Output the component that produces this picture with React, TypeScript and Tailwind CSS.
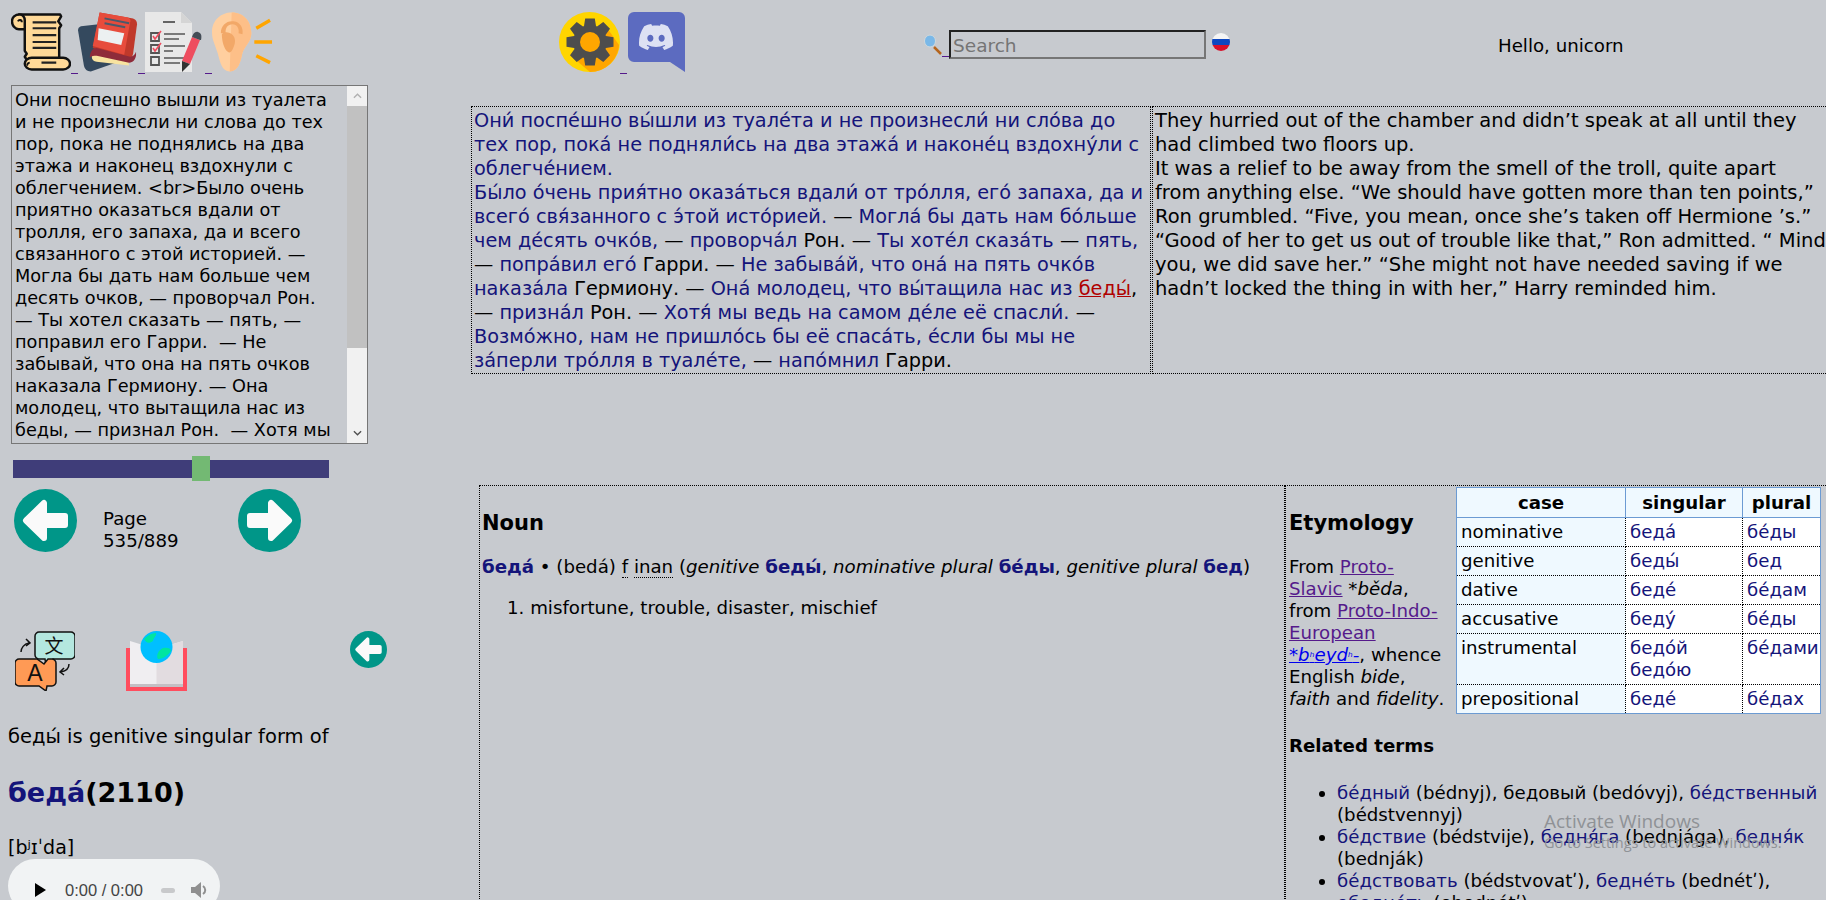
import { ReactNode } from "react"

const ink = "text-[#14147a]"

function W({ children }: { children: ReactNode }) {
    return <span className={ink}>{children}</span>
}

function ScrollIcon() {
    return (
        <svg viewBox="0 0 61 60" className="w-[60px] h-[60px]">
            <path d="M8 2H50l1 2-3 5 3 4-2 3V48H16l-2-3 2-3-2-3V16L8 16z" fill="#ffd998" stroke="#111" strokeWidth="2.500" strokeLinejoin="round" />
            <path d="M9 2C4 2 1 5 1 9s3 8 7 8h6V8C14 5 12 2 9 2z" fill="#ffd998" stroke="#111" strokeWidth="2.500" />
            <path d="M7 9c1-2 4-2 4 1" fill="none" stroke="#111" strokeWidth="2" />
            <path d="M21 46H53c4 0 7 3 7 6s-3 6-7 6H21c-4 0-7-3-7-6s3-6 7-6z" fill="#ffd998" stroke="#111" strokeWidth="2.500" />
            <path d="M22 10h24M22 16h24M22 23h24M22 30h24M22 36h24M31 51h15" stroke="#222" strokeWidth="2.200" />
            <path d="M19 51c-2 0-3 2-2 3" fill="none" stroke="#111" strokeWidth="2" />
        </svg>
    )
}

function BookIcon() {
    return (
        <svg viewBox="0 0 61 60" className="w-[60px] h-[60px]">
            <path d="M0 18c0-2 1-3 3-4l18-2 26 36-34 12c-4 0-6-2-7-6z" fill="#34495e" />
            <path d="M22 0l34 6c3 1 4 3 4 6l-4 30c-1 4-3 6-7 6L15 36z" fill="#c0392b" />
            <path d="M14 45c1-5 4-7 7-7l32 8c-2 3-2 5-1 8l-33-4c-3 0-5-2-5-5z" fill="#f8e3a0" />
            <path d="M12 46c0-6 3-10 7-10l34 9c3 0 5-2 6-5l0 4c-1 4-3 7-7 7l-33-7c-3 0-5 0-7 2z" fill="#8e2b3a" />
            <path d="M22 0l29 5c2 1 3 3 2 5l-6 33-32-9z" fill="#e74c3c" />
            <path d="M27 6l25 5M27 11l21 4" stroke="#4a5a6c" strokeWidth="2" />
            <path d="M21 16l26 5-3 12-24-5z" fill="#ecf0f1" />
        </svg>
    )
}

function ChecklistIcon() {
    return (
        <svg viewBox="0 0 60 60" className="w-[60px] h-[60px]">
            <path d="M0 0h36l11 11v49H0z" fill="#e8e8e8" />
            <path d="M36 0l11 11H36z" fill="#d5d5d5" />
            <path d="M18 10h12" stroke="#555" strokeWidth="1.800" />
            <path d="M6 21h8v8H6zM6 33h8v8H6zM6 45h8v8H6z" fill="none" stroke="#555" strokeWidth="1.800" />
            <path d="M8 24l2 3 6-8M8 36l2 3 6-8" fill="none" stroke="#ee4d5f" strokeWidth="1.600" />
            <path d="M19 22h21M19 27h15M19 34h21M19 39h9M19 46h21M19 51h16" stroke="#555" strokeWidth="1.600" />
            <path d="M47 25l8 3-10 24-8-3z" fill="#ee4d5f" />
            <path d="M47 25c1-3 3-6 6-5 3 1 4 3 3 8l-1 0z" fill="#444c56" />
            <path d="M37 49l8 3-8 8z" fill="#333" />
        </svg>
    )
}

function EarIcon() {
    return (
        <svg viewBox="0 0 62 60" className="w-[61px] h-[60px]">
            <path d="M20 0c13 0 20 10 20 21 0 9-7 13-9 20-2 9-4 19-13 19C10 60 8 50 6 42 3 32 0 28 0 20 0 8 9 0 20 0z" fill="#ffcf9f" />
            <path d="M20 0c13 0 20 10 20 21 0 9-7 13-9 20-2 9-4 19-13 19z" fill="#fdbf88" />
            <path d="M9 21c0-8 6-13 13-12 7 1 10 7 9 13l-4-1c1-5-2-9-6-9-5 0-8 4-7 9z" fill="#f2a868" />
            <path d="M10 22c3-3 8-2 11 1 3 3 3 8 1 12-2 5-4 7-6 5-4-3-6-12-6-18z" fill="#f2a868" />
            <path d="M45 16l14-8M43 30h18M45 44l14 7" stroke="#ffa500" strokeWidth="3.500" />
        </svg>
    )
}

// gear outline with eight teeth
const gearPoints = Array.from({ length: 8 }, (_, i) => {
    const a = (i * Math.PI) / 4
    const pt = (r: number, d: number) => `${(31 + r * Math.cos(a + d)).toFixed(1)},${(30 + r * Math.sin(a + d)).toFixed(1)}`
    return [pt(17, -0.36), pt(24, -0.2), pt(24, 0.2), pt(17, 0.36)].join(" ")
}).join(" ")

function GearIcon() {
    return (
        <svg viewBox="0 0 61 60" className="w-[61px] h-[60px]">
            <ellipse cx="30.500" cy="30" rx="30.500" ry="30" fill="#ffd500" />
            <path d="M44 10L60 33C59 48 46 60 31 60L12 44z" fill="#ffa600" />
            <polygon points={gearPoints} fill="#4d4d4d" />
            <circle cx="31" cy="30" r="10" fill="#ffa600" />
        </svg>
    )
}

function DiscordIcon() {
    return (
        <svg viewBox="0 0 57 60" className="w-[57px] h-[60px]">
            <path d="M6 0H51a6 6 0 0 1 6 6V60L42 50H6a6 6 0 0 1-6-6V6a6 6 0 0 1 6-6z" fill="#5c6bc0" />
            <svg x="11" y="8" width="34" height="34" viewBox="0 0 24 24">
                <path d="M20.317 4.3698a19.7913 19.7913 0 00-4.8851-1.5152.0741.0741 0 00-.0785.0371c-.211.3753-.4447.8648-.6083 1.2495-1.8447-.2762-3.68-.2762-5.4868 0-.1636-.3933-.4058-.8742-.6177-1.2495a.077.077 0 00-.0785-.037 19.7363 19.7363 0 00-4.8852 1.515.0699.0699 0 00-.0321.0277C.5334 9.0458-.319 13.5799.0992 18.0578a.0824.0824 0 00.0312.0561c2.0528 1.5076 4.0413 2.4228 5.9929 3.0294a.0777.0777 0 00.0842-.0276c.4616-.6304.8731-1.2952 1.226-1.9942a.076.076 0 00-.0416-.1057c-.6528-.2476-1.2743-.5495-1.8722-.8923a.077.077 0 01-.0076-.1277c.1258-.0943.2517-.1923.3718-.2914a.0743.0743 0 01.0776-.0105c3.9278 1.7933 8.18 1.7933 12.0614 0a.0739.0739 0 01.0785.0095c.1202.099.246.1981.3728.2924a.077.077 0 01-.0066.1276 12.2986 12.2986 0 01-1.873.8914.0766.0766 0 00-.0407.1067c.3604.698.7719 1.3628 1.225 1.9932a.076.076 0 00.0842.0286c1.961-.6067 3.9495-1.5219 6.0023-3.0294a.077.077 0 00.0313-.0552c.5004-5.177-.8382-9.6739-3.5485-13.6604a.061.061 0 00-.0312-.0286zM8.02 15.3312c-1.1825 0-2.1569-1.0857-2.1569-2.419 0-1.3332.9555-2.4189 2.157-2.4189 1.2108 0 2.1757 1.0952 2.1568 2.419 0 1.3332-.9555 2.4189-2.1569 2.4189zm7.9748 0c-1.1825 0-2.1569-1.0857-2.1569-2.419 0-1.3332.9554-2.4189 2.1569-2.4189 1.2108 0 2.1757 1.0952 2.1568 2.419 0 1.3332-.946 2.4189-2.1568 2.4189Z" fill="#dde1f3" />
            </svg>
        </svg>
    )
}

function MagnifierIcon() {
    return (
        <svg viewBox="0 0 18 21" className="w-[18px] h-[21px]">
            <path d="M10 13l7 7" stroke="#b5651d" strokeWidth="2.500" />
            <ellipse cx="6" cy="7" rx="5.500" ry="6" fill="#7ab8e8" stroke="#cfd8dc" />
        </svg>
    )
}

function FlagIcon() {
    return (
        <svg viewBox="0 0 20 18" className="w-5 h-[18px]">
            <clipPath id="flag-clip">
                <ellipse cx="10" cy="9" rx="9" ry="9" />
            </clipPath>
            <g clipPath="url(#flag-clip)">
                <rect width="20" height="6" fill="#f5f5f5" />
                <rect y="6" width="20" height="6" fill="#0d47c1" />
                <rect y="12" width="20" height="6" fill="#d8102a" />
            </g>
        </svg>
    )
}

function ArrowButton({ dir, small }: { dir: "left" | "right"; small?: boolean }) {
    const points = dir === "left"
        ? "12,31.500 30,14 30,27 51,27 51,36 30,36 30,49"
        : "51,31.500 33,14 33,27 12,27 12,36 33,36 33,49"
    return (
        <svg viewBox="0 0 63 63" className={small ? "w-[37px] h-[37px]" : "w-[63px] h-[63px]"}>
            <circle cx="31.500" cy="31.500" r="31.500" fill="#009688" />
            <polygon points={points} fill="#fafafa" stroke="#fafafa" strokeWidth="6" strokeLinejoin="round" />
        </svg>
    )
}

function TranslateIcon() {
    return (
        <svg viewBox="0 0 60 60" className="w-[60px] h-[60px]">
            <path d="M24 1h32c2 0 4 2 4 4v19c0 2-2 4-4 4H38l-7 7-1-7h-6c-2 0-4-2-4-4V5c0-2 2-4 4-4z" fill="#b4e7df" stroke="#111" strokeWidth="1.500" />
            <path d="M4 28h18l7 5 4-5h4c2 0 4 2 4 4v19c0 2-2 4-4 4h-5l-1 5-7-5H4c-2 0-4-2-4-4V32c0-2 2-4 4-4z" fill="#ff9a55" stroke="#111" strokeWidth="1.500" />
            <path d="M6 21c0-4 3-8 8-9M11 8l4 4-4 3M54 33c0 4-3 7-8 8M49 37l-4 4 4 3" fill="none" stroke="#111" strokeWidth="1.500" />
            <text x="39" y="22" textAnchor="middle" fontSize="19" fill="#111" fontFamily="'Noto Sans CJK SC', sans-serif">文</text>
            <text x="20" y="50" textAnchor="middle" fontSize="23" fill="#111" fontFamily="'Liberation Sans', sans-serif">A</text>
        </svg>
    )
}

function GlobeBookIcon() {
    return (
        <svg viewBox="0 0 61 60" className="w-[61px] h-[60px]">
            <path d="M0 17h61v43H0z" fill="#ff4d5e" />
            <path d="M4 10l26 8 27-8v46H4z" fill="#f0eef1" />
            <path d="M30.500 18L57 10v46H30.500z" fill="#e2dce0" />
            <path d="M4 53h53v3H4z" fill="#c4bfc4" />
            <circle cx="30.500" cy="16" r="16" fill="#00bfff" />
            <path d="M18 8c4-4 8-6 12-6 1 3-3 5-3 8-4 3-7 2-9-2zM32 28c-2-3 0-9 5-11 4-1 8 0 8 3-3 4-7 8-13 8z" fill="#00e5a0" />
        </svg>
    )
}

function IconLink({ children }: { children: ReactNode }) {
    return (
        <a className="flex items-end text-[#551a8b]">
            {children}
            <span className="w-[7px] h-px mb-[-2px] bg-[#551a8b]" />
        </a>
    )
}

function AudioPlayer() {
    return (
        <div className="flex items-center ml-2 mt-[1px] pt-[8px] w-[212px] h-[54px] rounded-full bg-[#f1f3f4] font-['Liberation_Sans',sans-serif] text-[#444]">
            <svg viewBox="0 0 11 14" className="ml-[27px] w-[11px] h-[14px]"><path d="M0 0l11 7-11 7z" fill="#000" /></svg>
            <span className="ml-[19px] text-[16.500px] whitespace-nowrap">0:00 / 0:00</span>
            <span className="ml-[18px] w-[14px] h-[5px] rounded-full bg-[#c8c9cb]" />
            <svg viewBox="0 0 18 18" className="ml-[16px] w-[18px] h-[18px]">
                <path d="M0 6h4l6-5v16l-6-5H0z" fill="#8f8f8f" />
                <path d="M12 5c3 2 3 6 0 8" fill="none" stroke="#8f8f8f" strokeWidth="2" />
            </svg>
        </div>
    )
}

const sourceText = "Они поспешно вышли из туалета и не произнесли ни слова до тех пор, пока не поднялись на два этажа и наконец вздохнули с облегчением. <br>Было очень приятно оказаться вдали от тролля, его запаха, да и всего связанного с этой историей. — Могла бы дать нам больше чем десять очков, — проворчал Рон. — Ты хотел сказать — пять, — поправил его Гарри.  — Не забывай, что она на пять очков наказала Гермиону. — Она молодец, что вытащила нас из беды, — признал Рон.  — Хотя мы ведь на самом деле её спасли. — Возможно, нам не пришлось бы её спасать, если бы мы не заперли тролля в туалете, — напомнил Гарри."

const tableRows = [
    { label: "nominative", singular: ["беда́"], plural: "бе́ды" },
    { label: "genitive", singular: ["беды́"], plural: "бед" },
    { label: "dative", singular: ["беде́"], plural: "бе́дам" },
    { label: "accusative", singular: ["беду́"], plural: "бе́ды" },
    { label: "instrumental", singular: ["бедо́й", "бедо́ю"], plural: "бе́дами" },
    { label: "prepositional", singular: ["беде́"], plural: "бе́дах" },
]

export default function App() {
    return (
        <div className="relative w-[1826px] h-[900px] overflow-hidden bg-[#c7cacf] text-black text-[18.200px] font-['DejaVu_Sans',sans-serif]">
            <header className="flex items-start h-[85px] pt-3">
                <div className="flex items-start w-[559px] pl-[11px]">
                    <IconLink><ScrollIcon /></IconLink>
                    <IconLink><BookIcon /></IconLink>
                    <IconLink><ChecklistIcon /></IconLink>
                    <EarIcon />
                </div>
                <div className="flex w-[365px]">
                    <IconLink><GearIcon /></IconLink>
                    <div className="ml-px"><DiscordIcon /></div>
                </div>
                <div className="flex items-center mt-[18px]">
                    <IconLink><MagnifierIcon /></IconLink>
                    <input
                        placeholder="Search"
                        className="w-[257px] h-[29px] px-[2px] pt-[2px] border-2 border-t-[#222] border-l-[#222] border-r-[#767676] border-b-[#767676] bg-transparent text-[18.500px] outline-none placeholder:text-[#757575]"
                    />
                    <div className="ml-[5px] mb-[5px]"><FlagIcon /></div>
                </div>
                <div className="ml-[267px] mt-[23px] leading-[22px]">Hello, unicorn</div>
            </header>

            <div className="flex items-start">
                <aside className="w-[471px] shrink-0">
                    <div className="flex ml-[11px] w-[357px] h-[359px] border border-[#767676] overflow-hidden">
                        <div className="w-[328px] shrink-0 pl-[3px] pr-[2px] pt-[3px] text-[17.700px] leading-[22px] whitespace-pre-wrap overflow-hidden">{sourceText}</div>
                        <div className="flex flex-col w-[20px] ml-auto shrink-0 bg-[#f1f1f1]">
                            <div className="flex items-center justify-center h-[20px] text-[#b0b0b0]">
                                <svg viewBox="0 0 10 6" className="w-[9px] h-[6px]"><path d="M1 5l4-4 4 4" fill="none" stroke="currentColor" strokeWidth="1.500" /></svg>
                            </div>
                            <div className="h-[242px] bg-[#c1c1c1]" />
                            <div className="flex-1" />
                            <div className="flex items-center justify-center h-[20px] text-[#505050]">
                                <svg viewBox="0 0 10 6" className="w-[9px] h-[6px]"><path d="M1 1l4 4 4-4" fill="none" stroke="currentColor" strokeWidth="1.500" /></svg>
                            </div>
                        </div>
                    </div>

                    <div className="relative ml-[13px] mt-[16px] w-[316px] h-[18px] bg-[#3f3d79]">
                        <div className="absolute left-[179px] top-[-4px] w-[18px] h-[25px] bg-[#73b973]" />
                    </div>

                    <div className="flex items-center ml-[14px] mt-[11px] h-[63px]">
                        <ArrowButton dir="left" />
                        <div className="w-[135px] ml-[26px] mt-[18px] leading-[22px]">Page<br />535/889</div>
                        <ArrowButton dir="right" />
                    </div>

                    <div className="flex items-start mt-[79px] ml-[15px]">
                        <TranslateIcon />
                        <div className="ml-[51px]"><GlobeBookIcon /></div>
                        <div className="ml-[163px]"><ArrowButton dir="left" small /></div>
                    </div>

                    <p className="ml-2 mt-[35px] text-[19.500px] leading-[22px]">беды́ is genitive singular form of</p>
                    <h2 className="ml-2 mt-[27px] text-[27px] font-bold leading-[36px]"><W>беда́</W>(2110)</h2>
                    <p className="ml-2 mt-[25px] text-[19px] leading-[22px]">[bʲɪˈda]</p>
                    <AudioPlayer />
                </aside>

                <main className="flex-1 min-w-0 pt-[21px]">
                    <div className="flex w-[1361px] h-[268px]">
                        <section className="w-[680px] shrink-0 border border-dotted border-black px-[2px] pt-[2px] text-[19.300px] leading-[24px]">
                            <W>Они́ поспе́шно вы́шли из туале́та и не произнесли́ ни сло́ва до тех пор, пока́ не подняли́сь на два этажа́ и наконе́ц вздохну́ли с облегче́нием.</W>
                            <br />
                            <W>Бы́ло о́чень прия́тно оказа́ться вдали́ от тро́лля, его́ запаха, да и всего́ свя́занного с э́той исто́рией.</W> — <W>Могла́ бы дать нам бо́льше чем де́сять очко́в,</W> — <W>проворча́л</W> Рон. — <W>Ты хоте́л сказа́ть</W> — <W>пять,</W> — <W>попра́вил его́</W> Гарри. — <W>Не забыва́й, что она́ на пять очко́в наказа́ла</W> Гермиону. — <W>Она́ молодец, что вы́тащила нас из</W> <span className="text-[#b00000] underline">беды́</span>, — <W>призна́л</W> Рон. — <W>Хотя́ мы ведь на самом де́ле её спасли́.</W> — <W>Возмо́жно, нам не пришло́сь бы её спаса́ть, е́сли бы мы не за́перли тро́лля в туале́те,</W> — <W>напо́мнил</W> Гарри.
                        </section>
                        <section className="w-[680px] shrink-0 ml-px border border-dotted border-black pl-[2px] pt-[2px] text-[19.500px] leading-[24px]">
                            They hurried out of the chamber and didn’t speak at all until they had climbed two floors up.
                            <br />
                            It was a relief to be away from the smell of the troll, quite apart from&nbsp;anything else. “We should have gotten more than ten points,” Ron grumbled. “Five, you mean, once she’s taken off Hermione ’s.” “Good of her to get us out of trouble like that,” Ron admitted. “ Mind you, we did save her.” “She might not have needed saving if we hadn’t locked the thing in with her,” Harry reminded him.
                        </section>
                    </div>

                    <div className="flex ml-2 mt-[111px] h-[416px]">
                        <section className="w-[806px] shrink-0 border border-dotted border-black border-b-0 px-[2px] leading-[22px]">
                            <h3 className="mt-[25px] text-[21px] font-bold leading-[24px]">Noun</h3>
                            <p className="mt-[21px]">
                                <b className={ink}>беда́</b> • (bedá) <span className="border-b border-dotted border-black">f</span> <span className="border-b border-dotted border-black">inan</span> (<i>genitive</i> <b className={ink}>беды́</b>, <i>nominative plural</i> <b className={ink}>бе́ды</b>, <i>genitive plural</i> <b className={ink}>бед</b>)
                            </p>
                            <ol className="mt-[19px] ml-[25px]">
                                <li>1. misfortune, trouble, disaster, mischief</li>
                            </ol>
                        </section>
                        <section className="flex-1 min-w-0 border border-dotted border-black border-b-0 border-r-0 pl-[3px] leading-[22px]">
                            <div className="flex items-start">
                                <div className="w-[167px] shrink-0 pr-[10px]">
                                    <h3 className="mt-[25px] text-[21px] font-bold leading-[24px]">Etymology</h3>
                                    <p className="mt-[21px]">
                                        From <a className="text-[#551a8b] underline">Proto-Slavic</a> <i>*běda</i>, from <a className="text-[#551a8b] underline">Proto-Indo-European</a> <a className="text-[#0000ee] underline"><i>*b<span className="text-xs">ʰ</span>eyd<span className="text-xs">ʰ</span>-</i></a>, whence English <i>bide</i>, <i>faith</i> and <i>fidelity</i>.
                                    </p>
                                </div>
                                <table className="mt-px w-[364px] table-fixed border-collapse border border-[#6c9bd3] bg-white">
                                    <colgroup>
                                        <col className="w-[169px]" />
                                        <col className="w-[117px]" />
                                        <col className="w-[78px]" />
                                    </colgroup>
                                    <thead>
                                        <tr className="h-[30px] bg-[#eff9ff]">
                                            <th className="border border-[#6c9bd3] font-bold">case</th>
                                            <th className="border border-[#6c9bd3] font-bold">singular</th>
                                            <th className="border border-[#6c9bd3] font-bold">plural</th>
                                        </tr>
                                    </thead>
                                    <tbody>
                                        {tableRows.map((row) => (
                                            <tr key={row.label}>
                                                <td className="h-[29px] align-top border border-dotted border-black bg-[#eff9ff] pl-1 py-[3px]">{row.label}</td>
                                                <td className="align-top border border-dotted border-black pl-1 py-[3px]">
                                                    {row.singular.map((form) => <div key={form} className={ink}>{form}</div>)}
                                                </td>
                                                <td className={`align-top border border-dotted border-black pl-1 py-[3px] ${ink}`}>{row.plural}</td>
                                            </tr>
                                        ))}
                                    </tbody>
                                </table>
                            </div>
                            <h4 className="mt-[21px] font-bold">Related terms</h4>
                            <ul className="mt-[25px] ml-[48px] list-disc">
                                <li><W>бе́дный</W> (bédnyj), бедовый (bedóvyj), <W>бе́дственный</W> (bédstvennyj)</li>
                                <li><W>бе́дствие</W> (bédstvije), <W>бедня́га</W> (bednjága), <W>бедня́к</W> (bednják)</li>
                                <li><W>бе́дствовать</W> (bédstvovatʹ), <W>бедне́ть</W> (bednétʹ), <W>обедне́ть</W> (obednétʹ)</li>
                            </ul>
                        </section>
                    </div>
                </main>
            </div>

            <div className="absolute left-[1544px] top-[809px] text-[#8f9296] font-['Open_Sans',sans-serif] pointer-events-none">
                <div className="text-[19px] leading-[24px]">Activate Windows</div>
                <div className="text-[14.500px] leading-[20px]">Go to Settings to activate Windows.</div>
            </div>
        </div>
    )
}
